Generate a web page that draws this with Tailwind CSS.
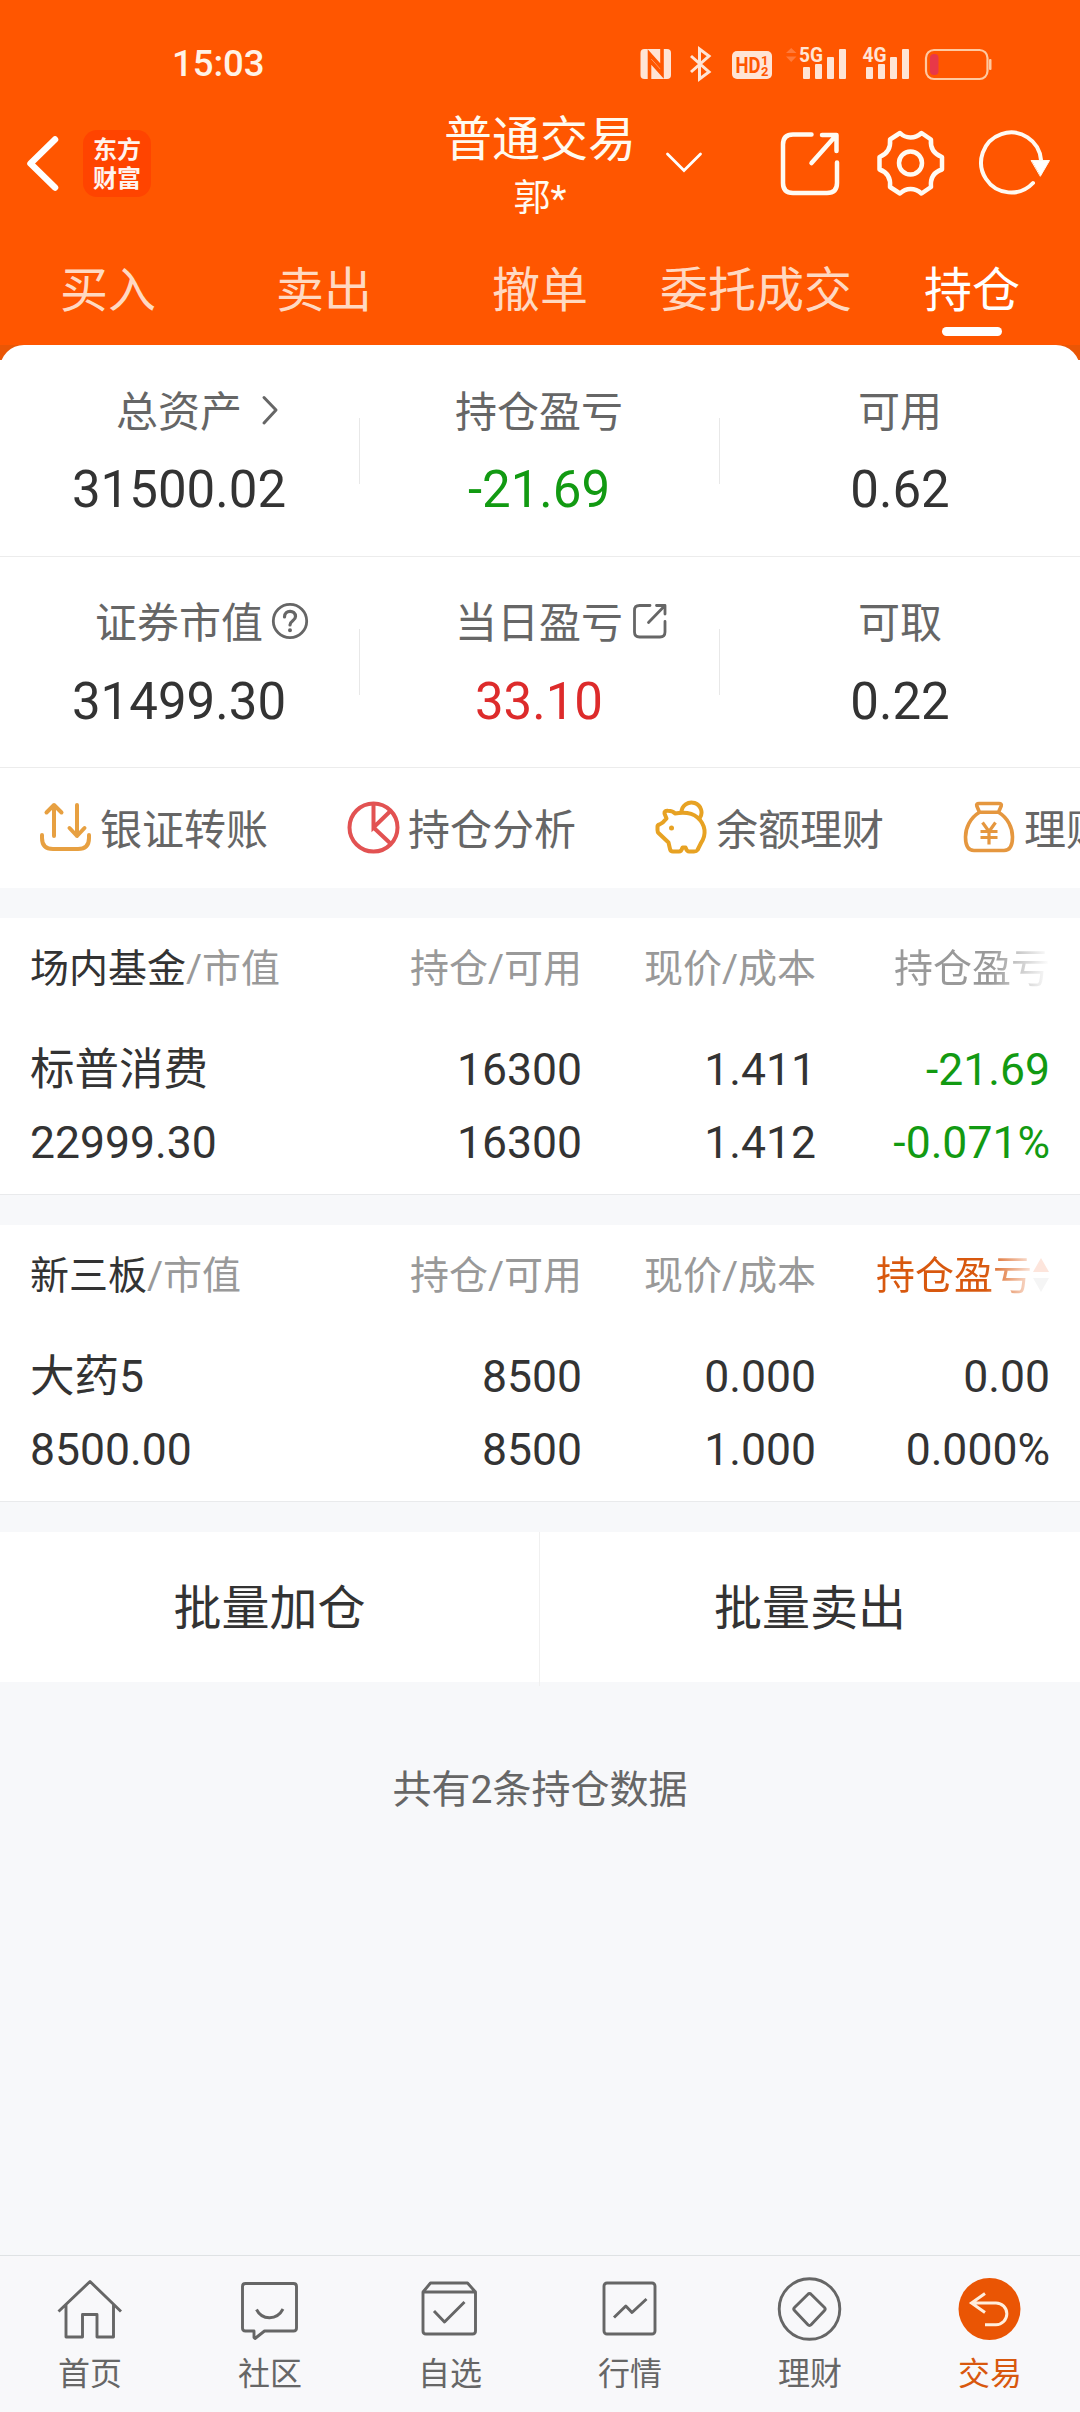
<!DOCTYPE html>
<html lang="zh-CN">
<head>
    <meta charset="UTF-8">
    <meta name="viewport" content="width=device-width, initial-scale=1.0">
    <title>普通交易 - 持仓</title>
    <script src="https://cdn.jsdelivr.net/npm/@tailwindcss/browser@4"></script>
</head>
<body class="bg-[#f7f8fa] font-[Roboto,'Noto_Sans_CJK_SC',sans-serif] text-[#333]">
<div class="w-[1080px] h-[2412px] flex flex-col overflow-hidden">

    <!-- header -->
    <header class="h-[345px] shrink-0 bg-[#ff5600] text-white flex flex-col">

        <!-- status bar -->
        <div class="h-[108px] pt-[20px] flex items-center justify-between pl-[172px] pr-[86px] shrink-0">
            <span class="text-[36.500px] leading-none font-medium text-[#fff3e6]">15:03</span>
            <svg class="w-[356px] h-[40px] text-[#ffe4d5]" viewBox="638 43 356 40" fill="currentColor">
                <!-- nfc -->
                <rect x="640.5" y="48" width="30.500" height="30" rx="4"/>
                <path d="M649.500 78V53L662 67M662 48V73L649.500 59" fill="none" stroke="#ff5600" stroke-width="3.600"/>
                <!-- bluetooth -->
                <path d="M691 55L709 71L699.500 78V48L709 55L691 71" fill="none" stroke="currentColor" stroke-width="3"/>
                <!-- hd -->
                <rect x="732" y="50" width="40" height="28" rx="5"/>
                <text x="735.5" y="72" font-size="22" font-weight="700" fill="#ff5600" textLength="25" lengthAdjust="spacingAndGlyphs">HD</text>
                <text x="761" y="63.500" font-size="13" font-weight="700" fill="#ff5600">1</text>
                <text x="761" y="75" font-size="13" font-weight="700" fill="#ff5600">2</text>
                <!-- 5G signal -->
                <path d="M786 52L791.200 47L796.500 52ZM786 55.500L791.200 61L796.500 55.500Z" fill="#ff7a3a"/>
                <text x="799" y="61" font-size="21" font-weight="700" textLength="24" lengthAdjust="spacingAndGlyphs">5G</text>
                <rect x="803" y="66" width="7" height="12" rx="1"/>
                <rect x="815" y="63" width="7" height="15" rx="1"/>
                <rect x="827" y="56" width="7" height="22" rx="1"/>
                <rect x="839" y="48" width="7" height="30" rx="1"/>
                <!-- 4G signal -->
                <text x="862.500" y="61" font-size="21" font-weight="700" textLength="24" lengthAdjust="spacingAndGlyphs">4G</text>
                <rect x="866" y="66" width="7" height="12" rx="1"/>
                <rect x="878" y="63" width="7" height="15" rx="1"/>
                <rect x="890" y="56" width="7" height="22" rx="1"/>
                <rect x="902" y="48" width="7" height="30" rx="1"/>
                <!-- battery -->
                <rect x="926" y="49" width="61.500" height="29" rx="8" fill="none" stroke="#ffc9a0" stroke-width="2.200"/>
                <rect x="930" y="53" width="8.500" height="21" rx="4" fill="#e83848"/>
                <rect x="989" y="58" width="2.500" height="11" rx="1" fill="#ffc9a0"/>
            </svg>
        </div>

        <!-- title bar -->
        <div class="h-[125px] shrink-0 flex">
            <div class="w-[360px] flex">
                <svg class="ml-[20px] mt-[20px] w-[50px] h-[70px]" viewBox="20 128 50 70" fill="none" stroke="#fff" stroke-width="6.500" stroke-linecap="round" stroke-linejoin="round"><path d="M55 139.500L30.500 163.500L55 187.500"/></svg>
                <div class="ml-[13px] mt-[22px] w-[68px] h-[67px] rounded-[14px] bg-[#ff4400] pt-[3px] text-center font-['Noto_Sans_CJK_SC',sans-serif] font-bold text-[24px] leading-[29px] text-[#fff3ee]">
                    <div>东方</div>
                    <div>财富</div>
                </div>
            </div>
            <div class="w-[360px] flex justify-center">
                <div class="w-[188px] pt-[2px] text-center text-[#fffaf0]">
                    <div class="-mx-[10px] text-[48px] leading-[60px]">普通交易</div>
                    <div class="text-[37px] leading-[58px]">郭*</div>
                </div>
                <svg class="ml-[26px] -mr-[74px] mt-[36px] w-[48px] h-[36px]" viewBox="660 144 48 36" fill="none" stroke="#fff" stroke-width="2.800" stroke-linecap="round"><path d="M667.500 154L684 170.500L700.500 154"/></svg>
            </div>
            <svg class="ml-[50px] w-[290px] h-[110px]" viewBox="770 108 290 110" fill="none" stroke="#fffaf2" stroke-width="4.500" stroke-linecap="round" stroke-linejoin="round">
                <!-- share -->
                <path d="M811.500 134.500H793Q783 134.500 783 144.500V183Q783 193 793 193H827Q837 193 837 183V162.500M811.500 163L836 135.500M822 135H836.500V151"/>
                <!-- settings -->
                <path d="M900 133C906 139 915 139 921.500 133L931 139.500C930 149 934 154 942 157V169.500C934 172 930 177 931 187L921.500 193.500C915 187.500 906 187.500 900 193.500L890 187C891 177 887 172 879.500 169.500V157C887 154 891 149 890 139.500Z"/>
                <circle cx="910.500" cy="163" r="11.500"/>
                <!-- refresh -->
                <path d="M1033 183A30 30 0 1 1 1041 160" stroke-width="4"/>
                <path d="M1031.500 160.500H1049.500L1040.500 176Z" fill="#fff" stroke-width="1"/>
            </svg>
        </div>

        <!-- tabs -->
        <nav class="h-[112px] grid grid-cols-5 text-center text-[48px] leading-[115px] text-[#ffd9c2]">
            <div>买入</div>
            <div>卖出</div>
            <div>撤单</div>
            <div>委托成交</div>
            <div class="text-white flex flex-col items-center">
                <span class="h-[94px]">持仓</span>
                <span class="w-[60px] h-[9px] rounded-full bg-white"></span>
            </div>
        </nav>
    </header>

    <!-- account summary -->
    <div class="shrink-0 bg-[linear-gradient(#ea5605_15px,#fff_15px)]">
        <div class="bg-white rounded-t-[24px]">
            <div class="h-[212px] border-b-[1px] border-[#ececec] grid grid-cols-3 relative">
                <div class="flex flex-col items-center pt-[38px] pr-[2px]">
                    <div class="h-[60px] flex items-center text-[42px] leading-[60px] text-[#666]">总资产
                        <svg class="ml-[18px] -mr-[40px] -mt-[5px] w-[22px] h-[32px]" viewBox="0 0 22 32" fill="none" stroke="#666" stroke-width="3" stroke-linecap="round" stroke-linejoin="round"><path d="M4 2.500L16 15L4 28"/></svg>
                    </div>
                    <div class="mt-[17px] text-[51px] leading-[60px]">31500.02</div>
                </div>
                <div class="flex flex-col items-center pt-[38px] pr-[2px]">
                    <div class="text-[42px] leading-[60px] text-[#666]">持仓盈亏</div>
                    <div class="mt-[17px] text-[51px] leading-[60px] text-[#129a12]">-21.69</div>
                </div>
                <div class="flex flex-col items-center pt-[38px]">
                    <div class="text-[42px] leading-[60px] text-[#666]">可用</div>
                    <div class="mt-[17px] text-[51px] leading-[60px]">0.62</div>
                </div>
                <span class="absolute left-[359px] top-[73px] w-px h-[66px] bg-[#e8e8e8]"></span>
                <span class="absolute left-[719px] top-[73px] w-px h-[66px] bg-[#e8e8e8]"></span>
            </div>
            <div class="h-[211px] border-b-[1px] border-[#ececec] grid grid-cols-3 relative">
                <div class="flex flex-col items-center pt-[37px] pr-[2px]">
                    <div class="h-[60px] flex items-center text-[42px] leading-[60px] text-[#666]">证券市值
                        <svg class="ml-[7px] -mr-[47px] -mt-[6px] w-[40px] h-[40px]" viewBox="0 0 40 40" fill="none" stroke="#666" stroke-width="2.800" stroke-linecap="round">
                            <circle cx="20" cy="20" r="16.700"/>
                            <path d="M14.500 16C14.500 8.500 25.500 8.500 25.500 15.500C25.500 20 20 19.500 20 24" stroke-width="3.200"/>
                            <circle cx="20" cy="29.300" r="1" fill="#666" stroke-width="2"/>
                        </svg>
                    </div>
                    <div class="mt-[18px] text-[51px] leading-[60px]">31499.30</div>
                </div>
                <div class="flex flex-col items-center pt-[37px] pr-[2px]">
                    <div class="h-[60px] flex items-center text-[42px] leading-[60px] text-[#666]">当日盈亏
                        <svg class="ml-[8px] -mr-[48px] -mt-[6px] w-[40px] h-[40px]" viewBox="0 0 40 40" fill="none" stroke="#666" stroke-width="2.800" stroke-linecap="round" stroke-linejoin="round">
                            <path d="M19 4.500H8.500Q3.500 4.500 3.500 9.500V31Q3.500 36 8.500 36H29Q34 36 34 31V20.500M17.500 21.500L33.500 5M25.500 4.500H34V13"/>
                        </svg>
                    </div>
                    <div class="mt-[18px] text-[51px] leading-[60px] text-[#dd2b2b]">33.10</div>
                </div>
                <div class="flex flex-col items-center pt-[37px]">
                    <div class="text-[42px] leading-[60px] text-[#666]">可取</div>
                    <div class="mt-[18px] text-[51px] leading-[60px]">0.22</div>
                </div>
                <span class="absolute left-[359px] top-[72px] w-px h-[66px] bg-[#e8e8e8]"></span>
                <span class="absolute left-[719px] top-[72px] w-px h-[66px] bg-[#e8e8e8]"></span>
            </div>

            <!-- shortcuts, scrolls sideways -->
            <div class="h-[120px] flex overflow-hidden pl-[38px] text-[42px] leading-[125px] text-[#666] whitespace-nowrap">
                <div class="w-[308px] shrink-0 flex gap-[6px]">
                    <svg class="mt-[32px] w-[56px] h-[56px]" viewBox="0 0 56 56" fill="none" stroke="#e7a041" stroke-width="4" stroke-linecap="round" stroke-linejoin="round"><path d="M16 36V5M8.500 12.500L16 5L23.500 12.500M39 5V36M31.500 28L39 36L46.500 28M4 35V38Q4 49 15 49H40Q51 49 51 38V35"/></svg>
                    银证转账
                </div>
                <div class="w-[308px] shrink-0 flex gap-[6px]">
                    <svg class="mt-[32px] w-[56px] h-[56px]" viewBox="0 0 56 56" fill="none" stroke="#e25252" stroke-width="4"><circle cx="27.500" cy="27.500" r="24"/><path d="M27.500 3V27.500L45 10.500M27.500 27.500L45 44"/></svg>
                    持仓分析
                </div>
                <div class="w-[308px] shrink-0 flex gap-[6px]">
                    <svg class="mt-[32px] w-[56px] h-[56px]" viewBox="0 0 56 56" fill="none" stroke="#e7a223" stroke-width="4" stroke-linejoin="round"><path d="M10.500 13.500Q10 10.500 14 10.800Q19 11 21 13.500Q36 11 43.500 17.500C52 25 52.500 35 47 43L43.500 50Q42.500 51.500 40 51.500H35Q33 51.500 31.500 47.500H28.500Q27.500 51.500 25 51.500H19Q16.500 51.500 16 49L14.500 42.500L4.500 33Q3.500 32 3.500 30V26.500Q3.500 25 5.500 24.500Q9 23 12.500 18.500Z"/><path d="M27.500 12.500A10 10 0 1 1 45.500 18.500"/><circle cx="17.500" cy="28" r="2.500" fill="#e7a223" stroke="none"/></svg>
                    余额理财
                </div>
                <div class="w-[308px] shrink-0 flex gap-[6px]">
                    <svg class="mt-[32px] w-[56px] h-[56px]" viewBox="0 0 56 56" fill="none" stroke="#e5973f" stroke-width="3.600" stroke-linejoin="round"><path d="M17.500 12.300L14.800 6Q14 3.500 17 3.500H37Q40 3.500 39.200 6L36.500 12.300ZM17.500 12.300C8 18 3.500 28 3.500 37Q3.500 50.500 12 50.500H42Q50.500 50.500 50.500 37C50.500 28 46 18 36.500 12.300"/><path d="M20.500 22.500L27 31.500L33.500 22.500M27 31.500V44.500M18.500 31.500H35.500M18.500 37.500H35.500" stroke-width="3.200"/></svg>
                    理财
                </div>
            </div>
        </div>
    </div>

    <!-- fund holdings -->
    <section class="mt-[30px] h-[277px] shrink-0 bg-white border-b border-[#e9eaec] px-[30px]">
        <div class="h-[99px] grid grid-cols-[318px_234px_234px_234px] text-right text-[39px] leading-[102px] text-[#999] whitespace-nowrap">
            <div class="text-left"><span class="text-[#333]">场内基金</span>/市值</div>
            <div>持仓/可用</div>
            <div>现价/成本</div>
            <div><span class="text-transparent bg-clip-text bg-[linear-gradient(90deg,#999_62%,#fff_100%)]">持仓盈亏</span></div>
        </div>
        <div class="mt-[17px] grid grid-cols-[318px_234px_234px_234px] text-right text-[44.500px] leading-[73px] whitespace-nowrap">
            <div class="text-left">标普消费</div>
            <div>16300</div>
            <div>1.411</div>
            <div class="text-[#129a12]">-21.69</div>
            <div class="text-left">22999.30</div>
            <div>16300</div>
            <div>1.412</div>
            <div class="text-[#129a12]">-0.071%</div>
        </div>
    </section>

    <!-- neeq holdings -->
    <section class="mt-[30px] h-[277px] shrink-0 bg-white border-b border-[#e9eaec] px-[30px]">
        <div class="h-[99px] grid grid-cols-[318px_234px_234px_234px] text-right text-[39px] leading-[102px] text-[#999] whitespace-nowrap">
            <div class="text-left"><span class="text-[#333]">新三板</span>/市值</div>
            <div>持仓/可用</div>
            <div>现价/成本</div>
            <div class="flex justify-end">
                <span class="text-transparent bg-clip-text bg-[linear-gradient(90deg,#d8580e_70%,#fbe6dc_100%)]">持仓盈亏</span>
                <svg class="mt-[32px] w-[18px] h-[36px]" viewBox="0 0 18 36"><path d="M1 15L9 1L17 15Z" fill="#fde5dc"/><path d="M1 21L9 35L17 21Z" fill="#f5f5f5"/></svg>
            </div>
        </div>
        <div class="mt-[17px] grid grid-cols-[318px_234px_234px_234px] text-right text-[44.500px] leading-[73px] whitespace-nowrap">
            <div class="text-left">大药5</div>
            <div>8500</div>
            <div>0.000</div>
            <div>0.00</div>
            <div class="text-left">8500.00</div>
            <div>8500</div>
            <div>1.000</div>
            <div>0.000%</div>
        </div>
    </section>

    <!-- batch actions -->
    <div class="mt-[30px] h-[150px] shrink-0 bg-white grid grid-cols-2 text-center text-[48px] leading-[154px]">
        <div class="border-r border-[#f0f0f0]">批量加仓</div>
        <div>批量卖出</div>
    </div>

    <p class="mt-[78px] text-center text-[39px] leading-[60px] text-[#666]">共有2条持仓数据</p>

    <!-- bottom navigation -->
    <nav class="mt-auto h-[157px] shrink-0 border-t border-[#dfe2e4] bg-[#f8f8fa] grid grid-cols-6 text-[32px] leading-[40px] text-[#666]">
        <div class="flex flex-col items-center pt-[19px]">
            <svg class="w-[68px] h-[68px]" viewBox="0 0 68 68" fill="none" stroke="#666" stroke-width="2.900" stroke-linejoin="round"><path d="M2.500 36.500L34 6.500L65 36.500M10 30V62H26.500V39.500H41V62H57.500V30"/></svg>
            <span class="mt-[11px]">首页</span>
        </div>
        <div class="flex flex-col items-center pt-[19px]">
            <svg class="w-[68px] h-[68px]" viewBox="0 0 68 68" fill="none" stroke="#666" stroke-width="2.900" stroke-linejoin="round"><path d="M9.500 8.500H57.500Q60.500 8.500 60.500 11.500V53Q60.500 56 57.500 56H28.500L19 63.500L18 62.500V56H9.500Q6.500 56 6.500 53V11.500Q6.500 8.500 9.500 8.500Z"/><path d="M20.500 34.500C26 45.500 41 45.500 47 34"/></svg>
            <span class="mt-[11px]">社区</span>
        </div>
        <div class="flex flex-col items-center pt-[19px]">
            <svg class="w-[68px] h-[68px]" viewBox="0 0 68 68" fill="none" stroke="#666" stroke-width="2.900" stroke-linejoin="round"><path d="M7 17L14.500 8H51.500L59.500 17M7 17H59.500V56Q59.500 59 56.500 59H10Q7 59 7 56ZM18 36L28.500 47L48.500 27"/></svg>
            <span class="mt-[11px]">自选</span>
        </div>
        <div class="flex flex-col items-center pt-[19px]">
            <svg class="w-[68px] h-[68px]" viewBox="0 0 68 68" fill="none" stroke="#666" stroke-width="2.900" stroke-linejoin="round"><rect x="8" y="8" width="51" height="51" rx="3"/><path d="M18 42.500L29.800 31L36 37.500L50.500 24"/></svg>
            <span class="mt-[11px]">行情</span>
        </div>
        <div class="flex flex-col items-center pt-[19px]">
            <svg class="w-[68px] h-[68px]" viewBox="0 0 68 68" fill="none" stroke="#666" stroke-width="2.900" stroke-linejoin="round"><circle cx="33.500" cy="34" r="30.300"/><path d="M31.700 19.500Q33.500 17.500 35.300 19.500L48.500 32.500Q50 34 48.500 35.500L35.300 49.500Q33.500 51.500 31.700 49.500L18.500 35.500Q17 34 18.500 32.500Z"/></svg>
            <span class="mt-[11px]">理财</span>
        </div>
        <div class="flex flex-col items-center pt-[19px] text-[#d8580e]">
            <svg class="w-[68px] h-[68px]" viewBox="0 0 68 68" fill="none" stroke="#ffeedd" stroke-width="3"><circle cx="33.500" cy="34" r="31" fill="#ea5504" stroke="none"/><path d="M29 18.500L15.500 28L29 37.500M15.500 28H40A10.800 10.800 0 0 1 40 49.700H29"/></svg>
            <span class="mt-[11px]">交易</span>
        </div>
    </nav>
</div>
</body>
</html>
